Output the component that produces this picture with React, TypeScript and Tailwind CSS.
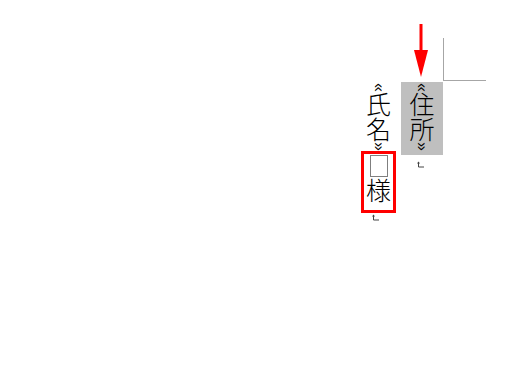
import React from 'react'

// ── Small marks ───────────────────────────────────────────────────────────────

// Word's vertical paragraph mark (↵ turned a quarter)
function ParaMark({ className = '' }: { className?: string }) {
  return (
    <svg width="9" height="7" viewBox="0 0 9 7" className={className}>
      <path d="M8 6H2.5V1.5" fill="none" stroke="#444" strokeWidth="1" />
      <path d="M1 2.5L2.5 0.5L4 2.5Z" fill="#444" />
    </svg>
  )
}

const vertical = "[writing-mode:vertical-rl] whitespace-nowrap font-['Noto_Sans_CJK_JP',sans-serif] font-light text-[25px] leading-[30px]"
const mark = "text-[16px] font-['Liberation_Sans',sans-serif] font-normal"

// ── Main ──────────────────────────────────────────────────────────────────────

export default function App() {
  return (
    <div className="relative w-[523px] h-[378px] bg-white overflow-hidden text-black">
      {/* page corner mark */}
      <div className="absolute left-[443px] top-[38px] w-[43px] h-[43px] border-l border-b border-[#a6a6a6]" />

      {/* red pointer arrow */}
      <svg width="14" height="54" viewBox="0 0 14 54" className="absolute left-[414px] top-[24px]">
        <rect x="5.5" y="0" width="3" height="28" fill="#ff0000" />
        <path d="M0 26H14L7 53Z" fill="#ff0000" />
      </svg>

      {/* vertical text, right to left */}
      <div className="flex items-start gap-[5px] pl-[361px] pt-[82px]">
        {/* 氏名 □様 */}
        <div className="w-[35px] flex flex-col items-center">
          <p className={`${vertical} pt-[1px]`}>
            <span className={mark}>«</span>氏名<span className={mark}>»</span>
          </p>
          <div className="w-[35px] h-[62px] border-[3px] border-[#ff0000] flex flex-col items-center pt-[1px]">
            <div className="w-[18px] h-[22px] border border-[#7f7f7f]" />
            <p className={`${vertical} mt-[1px]`}>様</p>
          </div>
          <ParaMark className="mt-[1px] -ml-[6px]" />
        </div>

        {/* 住所 (highlighted) */}
        <div className="w-[42px] flex flex-col items-center">
          <div className="w-[42px] h-[73px] bg-[#bfbfbf] flex justify-center pt-[1px]">
            <p className={vertical}>
              <span className={mark}>«</span>住所<span className={mark}>»</span>
            </p>
          </div>
          <ParaMark className="mt-[6px] -ml-[3px]" />
        </div>
      </div>
    </div>
  )
}
